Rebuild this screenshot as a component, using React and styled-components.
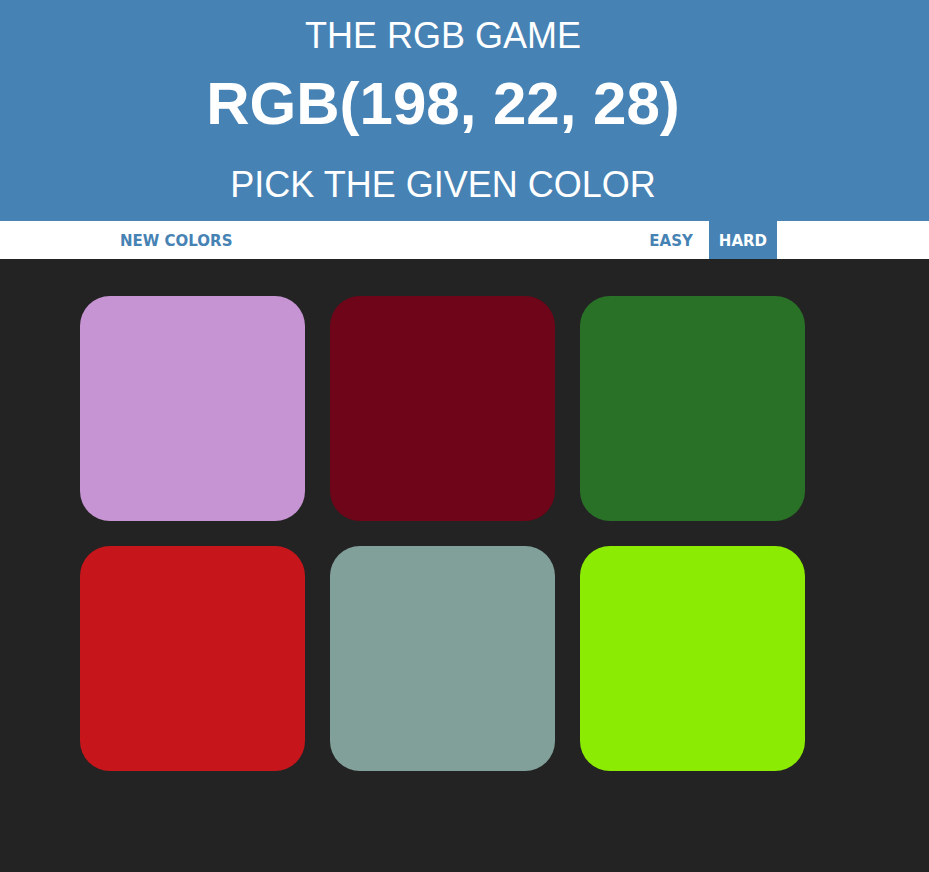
import React from "react";
import styled, { createGlobalStyle } from "styled-components";

const GlobalStyle = createGlobalStyle`
  html, body {
    margin: 0;
    padding: 0;
    background: #232323;
    font-family: "Liberation Sans", Arial, sans-serif;
  }
`;

const Page = styled.div`
  min-height: 872px;
  background: #232323;
`;

const Header = styled.header`
  background: steelblue;
  color: #ffffff;
  text-align: center;
  padding: 18px 43px 18px 0;
`;

const Title = styled.h1`
  margin: 0;
  font-weight: 400;
  font-size: 36px;
  line-height: 36px;
  text-transform: uppercase;
`;

const ColorDisplay = styled.div`
  margin-top: 20px;
  font-weight: 700;
  font-size: 60px;
  line-height: 60px;
`;

const Message = styled.div`
  margin-top: 33px;
  font-size: 36px;
  line-height: 36px;
`;

const Stripe = styled.nav`
  background: #ffffff;
  height: 38px;
  display: flex;
  align-items: stretch;
  padding-left: 110px;
  padding-right: 152px;
`;

const Button = styled.button`
  border: none;
  outline: none;
  background: ${(p) => (p.$selected ? "steelblue" : "transparent")};
  color: ${(p) => (p.$selected ? "#ffffff" : "steelblue")};
  font-family: "DejaVu Sans", Verdana, sans-serif;
  font-weight: 700;
  font-size: 15px;
  text-transform: uppercase;
  padding: 2px 10px 0;
  margin: 0;
  cursor: pointer;
`;

const Spacer = styled.div`
  flex: 1;
`;

const Modes = styled.div`
  display: flex;
  gap: 6px;
`;

const Board = styled.div`
  display: grid;
  grid-template-columns: repeat(3, 225px);
  gap: 25px;
  padding: 37px 0 0 80px;
`;

const Square = styled.div`
  width: 225px;
  height: 225px;
  border-radius: 30px;
  background: ${(p) => p.$color};
`;

const colors = [
  "rgb(198, 148, 210)",
  "rgb(110, 5, 25)",
  "rgb(42, 113, 40)",
  "rgb(198, 22, 28)",
  "rgb(130, 160, 154)",
  "rgb(139, 235, 3)",
];

const App = () => {
  return (
    <Page>
      <GlobalStyle />
      <Header>
        <Title>The RGB Game</Title>
        <ColorDisplay>RGB(198, 22, 28)</ColorDisplay>
        <Message>PICK THE GIVEN COLOR</Message>
      </Header>
      <Stripe>
        <Button>New Colors</Button>
        <Spacer />
        <Modes>
          <Button>Easy</Button>
          <Button $selected>Hard</Button>
        </Modes>
      </Stripe>
      <Board>
        {colors.map((c) => (
          <Square key={c} $color={c} />
        ))}
      </Board>
    </Page>
  );
};

export default App;
